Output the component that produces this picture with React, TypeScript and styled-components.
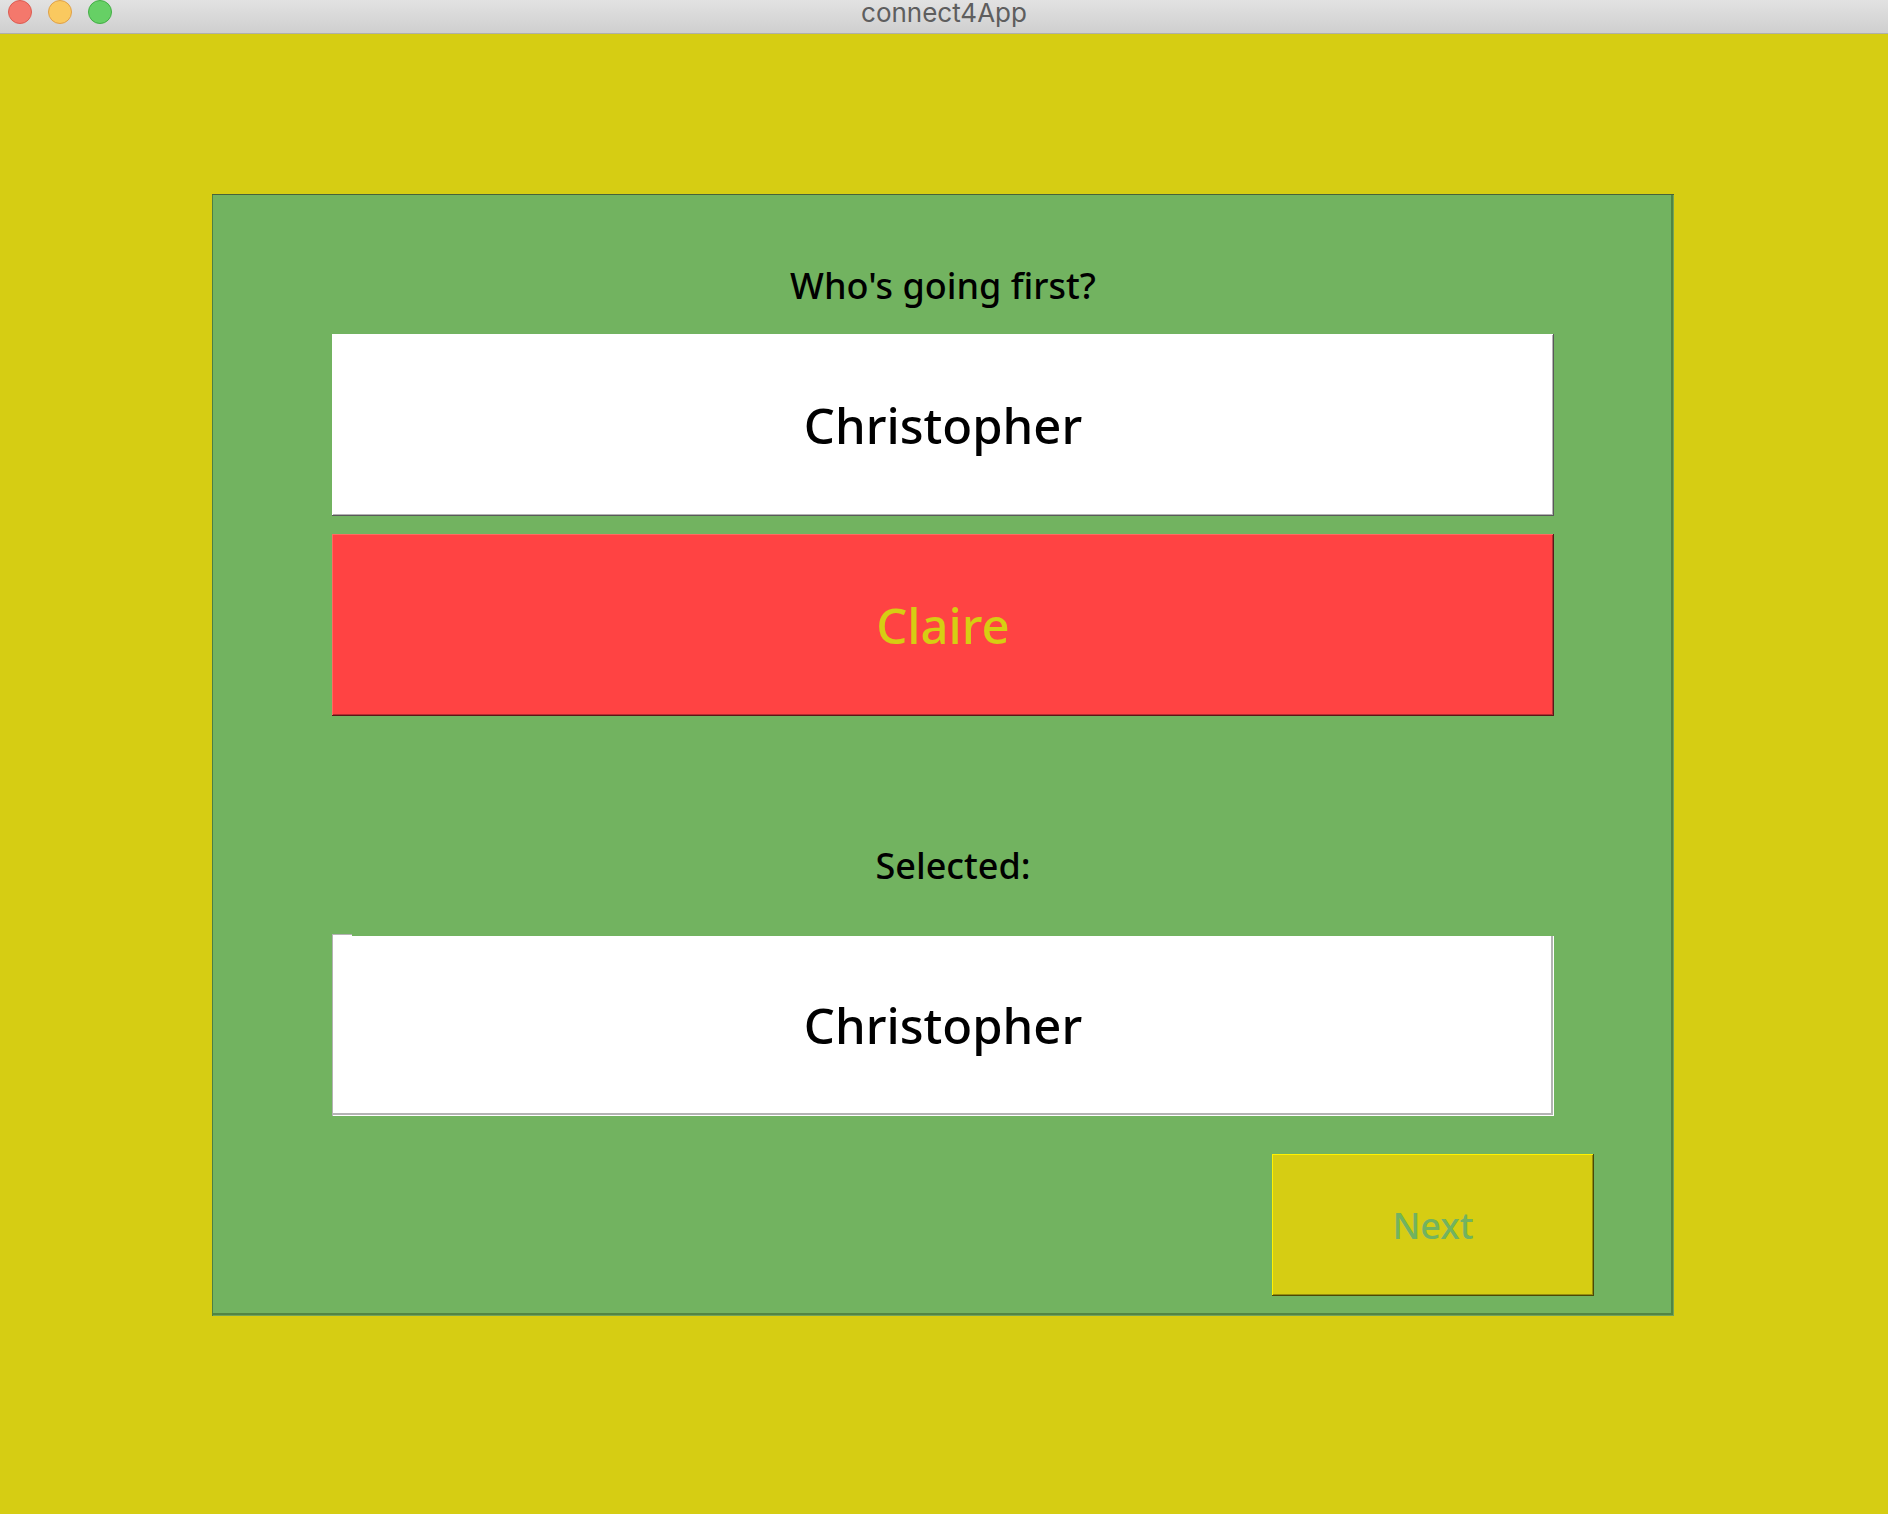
import { useState } from "react";
import styled, { createGlobalStyle } from "styled-components";

const GlobalStyle = createGlobalStyle`
  * { box-sizing: border-box; }
  body { margin: 0; background: #d6cd13; }
`;

const Window = styled.div`
  min-height: 100vh;
  display: flex;
  flex-direction: column;
  background: #d6cd13;
  font-family: "Noto Sans", "Open Sans", sans-serif;
  color: #000;
`;

const TitleBar = styled.header`
  display: grid;
  grid-template-columns: 1fr auto 1fr;
  height: 34px;
  padding: 0 8px;
  background: linear-gradient(#e2e2e2, #cfcfcf);
  border-bottom: 1px solid #b0b0a8;
`;

const Lights = styled.div`
  display: flex;
  gap: 16px;
`;

const Light = styled.button<{ $fill: string; $edge: string }>`
  width: 24px;
  height: 24px;
  padding: 0;
  border: 1px solid ${(p) => p.$edge};
  border-radius: 50%;
  background: ${(p) => p.$fill};
`;

const Title = styled.h1`
  margin: 0;
  font: 400 26px/26px Inter, Roboto, sans-serif;
  color: #5e5e5e;
`;

const Panel = styled.main`
  display: flex;
  flex-direction: column;
  margin: 160px 214px 0 212px;
  padding: 62px 120px 20px;
  background: #72b360;
  box-shadow:
    inset 0 1px #47633c,
    inset 1px 0 #4d7f45,
    inset -1px -1px #72a45a,
    inset -3px -3px #518544;
`;

const Question = styled.h2`
  margin: 0 0 18px;
  font-size: 36px;
  line-height: 60px;
  font-weight: 500;
  text-align: center;
`;

const Choices = styled.div`
  display: flex;
  flex-direction: column;
  gap: 18px;
`;

type Tone = { fill: string; text: string; light: string; mid: string; dark: string };

const tones: Record<string, Tone> = {
  white: { fill: "#ffffff", text: "#000000", light: "#ffffff", mid: "#b3b3b3", dark: "#595959" },
  red: { fill: "#ff4343", text: "#d6cd13", light: "#ff6a60", mid: "#b32f2f", dark: "#591818" },
  yellow: { fill: "#d6cd13", text: "#72b360", light: "#fff200", mid: "#968f0d", dark: "#4b4807" },
};

const BevelButton = styled.button<{ $tone: Tone }>`
  border: 0;
  padding: 0;
  font-family: inherit;
  font-weight: 500;
  cursor: pointer;
  color: ${(p) => p.$tone.text};
  background: ${(p) => p.$tone.fill};
  box-shadow:
    inset -1px -1px ${(p) => p.$tone.dark},
    inset 1px 1px ${(p) => p.$tone.light},
    inset -2px -2px ${(p) => p.$tone.mid};
`;

const PlayerButton = styled(BevelButton)`
  height: 182px;
  font-size: 49px;
`;

const NextButton = styled(BevelButton)`
  align-self: flex-end;
  width: 322px;
  height: 142px;
  margin: 38px -40px 0 0;
  font-size: 36px;
`;

const SelectedLabel = styled.label`
  z-index: 1;
  height: 100px;
  margin: 120px 0 -2px 20px;
  font-size: 36px;
  line-height: 60px;
  font-weight: 500;
  text-align: center;
  background: #72b360;
`;

const SelectedPlayer = styled.output<{ $tone: Tone }>`
  display: flex;
  align-items: center;
  justify-content: center;
  height: 182px;
  font-size: 49px;
  font-weight: 500;
  color: ${(p) => p.$tone.text};
  background: ${(p) => p.$tone.fill};
  box-shadow:
    inset 1px 1px ${(p) => p.$tone.mid},
    inset -1px -1px ${(p) => p.$tone.light},
    inset -3px -3px ${(p) => p.$tone.mid};
`;

const players = [
  { name: "Christopher", tone: tones.white },
  { name: "Claire", tone: tones.red },
];

export default function App() {
  const [selected, setSelected] = useState(players[0]);
  return (
    <Window>
      <GlobalStyle />
      <TitleBar>
        <Lights>
          <Light aria-label="Close" $fill="#f4786c" $edge="#dc5c52" />
          <Light aria-label="Minimize" $fill="#fac95f" $edge="#dfa048" />
          <Light aria-label="Zoom" $fill="#66d065" $edge="#43ae45" />
        </Lights>
        <Title>connect4App</Title>
      </TitleBar>
      <Panel>
        <Question>Who's going first?</Question>
        <Choices>
          {players.map((player) => (
            <PlayerButton key={player.name} $tone={player.tone} onClick={() => setSelected(player)}>
              {player.name}
            </PlayerButton>
          ))}
        </Choices>
        <SelectedLabel htmlFor="selected">Selected:</SelectedLabel>
        <SelectedPlayer id="selected" $tone={selected.tone}>
          {selected.name}
        </SelectedPlayer>
        <NextButton $tone={tones.yellow}>Next</NextButton>
      </Panel>
    </Window>
  );
}
